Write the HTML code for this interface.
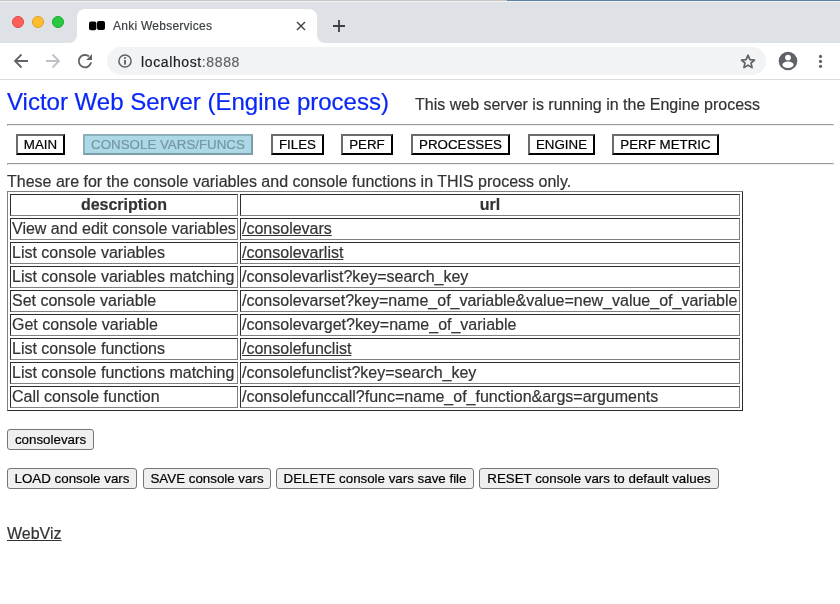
<!DOCTYPE html>
<html><head><meta charset="utf-8">
<style>
html,body{margin:0;padding:0;width:840px;height:604px;overflow:hidden;background:#fff;font-family:"Liberation Sans",sans-serif;}
.abs{position:absolute;}
#strip{position:absolute;left:0;top:0;width:840px;height:43px;background:#dee1e6;}
#topline{position:absolute;left:0;top:0;width:840px;height:1px;background:#c9cbcf;}
.light{position:absolute;top:16px;width:12px;height:12px;border-radius:50%;box-sizing:border-box;}
#tab{position:absolute;left:77px;top:9px;width:240px;height:34px;background:#fff;border-radius:8px 8px 0 0;}
.flare{position:absolute;top:35px;width:8px;height:8px;background:#fff;}
.flare i{position:absolute;left:0;top:0;width:8px;height:8px;background:#dee1e6;}
#toolbar{position:absolute;left:0;top:43px;width:840px;height:36px;background:#fff;}
#tbline{position:absolute;left:0;top:79px;width:840px;height:1px;background:#dadce0;}
#omni{position:absolute;left:107px;top:47px;width:659px;height:28px;border-radius:14px;background:#f1f3f4;}
#page{position:absolute;will-change:transform;-webkit-text-stroke:0.2px currentColor;left:0;top:80px;width:840px;height:524px;color:#333;font-size:16px;}
.hr{position:absolute;left:7px;width:827px;height:1px;background:#9a9a9a;}
.hr2{position:absolute;left:7px;width:827px;height:1px;background:#eeeeee;}
.nb{position:absolute;top:54px;height:21px;box-sizing:border-box;border:2px solid #000;border-top-color:#6b6b6b;border-left-color:#6b6b6b;background:#fff;color:#000;font-size:13.333px;line-height:15px;padding:1px 0;text-align:center;white-space:nowrap;}
.nb.act{background:#add8e6;color:#7497a1;border-color:#7b9ea8;border-top-color:#8cb0bb;border-left-color:#8cb0bb;}
table.t{position:absolute;left:7px;top:111px;border-collapse:separate;border-spacing:2px;font-size:16px;color:#333;}
table.t td,table.t th{padding:1px;line-height:18px;white-space:nowrap;}
table.t a{color:#333;text-decoration:underline;}
.btn{position:absolute;height:21px;box-sizing:border-box;border:1px solid #767676;border-radius:3px;background:#efefef;color:#000;font-size:13.333px;line-height:18px;padding-top:1px;text-align:center;white-space:nowrap;}
</style></head><body>
<div id="chrome" style="position:absolute;left:0;top:0;width:840px;height:80px;will-change:transform;-webkit-text-stroke:0.2px currentColor;">
<div id="strip"></div>
<div class="abs" style="left:0;top:0;width:507px;height:1px;background:#c4c4c4"></div><div class="abs" style="left:507px;top:0;width:333px;height:1px;background:#5f82a8"></div><div class="abs" style="left:0;top:1px;width:840px;height:1px;background:#f3f4f6"></div>
<div class="light" style="left:12px;background:#ff5f57;border:1px solid #e2463f;"></div>
<div class="light" style="left:32px;background:#febc2e;border:1px solid #e1a116;"></div>
<div class="light" style="left:52px;background:#28c840;border:1px solid #14ae2a;"></div>
<div class="flare" style="left:69px;"><i style="border-radius:0 0 8px 0;"></i></div>
<div class="flare" style="left:317px;"><i style="border-radius:0 0 0 8px;"></i></div>
<div id="tab"></div>
<svg class="abs" style="left:89px;top:21px" width="17" height="10" viewBox="0 0 17 10"><rect x="0" y="0.6" width="7.4" height="8.6" rx="2" fill="#000"/><rect x="8" y="0" width="8" height="9" rx="2" fill="#000"/></svg>
<div class="abs" style="left:113px;top:19px;font-size:12px;line-height:14px;color:#3c4043;letter-spacing:0.25px;white-space:nowrap;">Anki Webservices</div>
<svg class="abs" style="left:296px;top:21px" width="10" height="10" viewBox="0 0 10 10"><path d="M1 1L9 9M9 1L1 9" stroke="#3c4043" stroke-width="1.4"/></svg>
<svg class="abs" style="left:333px;top:20px" width="12" height="12" viewBox="0 0 12 12"><path d="M6 0V12M0 6H12" stroke="#3c4043" stroke-width="1.8"/></svg>
<div id="toolbar"></div>
<div id="tbline"></div>
<svg class="abs" style="left:13px;top:53px" width="16" height="16" viewBox="0 0 16 16"><path d="M15 8H2.5M8.5 1.5L2 8l6.5 6.5" fill="none" stroke="#5f6368" stroke-width="1.8"/></svg>
<svg class="abs" style="left:45px;top:53px" width="16" height="16" viewBox="0 0 16 16"><path d="M1 8H13.5M7.5 1.5L14 8l-6.5 6.5" fill="none" stroke="#bdc1c6" stroke-width="1.8"/></svg>
<svg class="abs" style="left:77px;top:53px" width="16" height="16" viewBox="0 0 16 16"><path d="M14.1 9.4A6.2 6.2 0 1 1 11.9 3.3" fill="none" stroke="#5f6368" stroke-width="1.9"/><path d="M15 1.1V6.9H9.2z" fill="#5f6368"/></svg>
<div id="omni"></div>
<svg class="abs" style="left:118px;top:54px" width="14" height="14" viewBox="0 0 14 14"><circle cx="7" cy="7" r="6.1" fill="none" stroke="#5f6368" stroke-width="1.5"/><rect x="6.2" y="6" width="1.6" height="4.6" fill="#45494e"/><rect x="6.2" y="3.1" width="1.6" height="1.7" fill="#45494e"/></svg>
<div class="abs" style="left:141px;top:54px;font-size:14px;line-height:16px;color:#202124;letter-spacing:0.62px;white-space:nowrap;">localhost<span style="color:#5f6368">:8888</span></div>
<svg class="abs" style="left:740px;top:53.5px" width="16" height="15" viewBox="0 0 16 15"><path d="M8 1.2l1.9 4.4 4.6.4-3.5 3 1.1 4.6L8 11.2l-4.1 2.4L5 9 1.5 6l4.6-.4z" fill="none" stroke="#5f6368" stroke-width="1.65" stroke-linejoin="round"/></svg>
<svg class="abs" style="left:778px;top:51px" width="20" height="20" viewBox="0 0 20 20"><circle cx="10" cy="10" r="9.3" fill="#5f6368"/><circle cx="10" cy="6.6" r="2.9" fill="#fff"/><ellipse cx="10" cy="13.7" rx="5.6" ry="3.2" fill="#fff"/></svg>
<svg class="abs" style="left:817px;top:53px" width="8" height="16" viewBox="0 0 8 16"><circle cx="3.5" cy="3.4" r="1.6" fill="#5f6368"/><circle cx="3.5" cy="8.4" r="1.6" fill="#5f6368"/><circle cx="3.5" cy="13.3" r="1.6" fill="#5f6368"/></svg>

</div>
<div id="page">
<div class="abs" style="left:7px;top:7.5px;font-size:24px;line-height:28px;color:#0a28f5;white-space:nowrap;">Victor Web Server (Engine process)</div>
<div class="abs" style="left:415px;top:16px;font-size:16px;line-height:18px;white-space:nowrap;">This web server is running in the Engine process</div>
<hr style="position:absolute;left:7px;top:44px;width:825px;margin:0;">
<div class="nb" style="left:16px;width:49px;">MAIN</div>
<div class="nb act" style="left:83px;width:170px;">CONSOLE VARS/FUNCS</div>
<div class="nb" style="left:271px;width:53px;">FILES</div>
<div class="nb" style="left:341px;width:52px;">PERF</div>
<div class="nb" style="left:411px;width:99px;">PROCESSES</div>
<div class="nb" style="left:528px;width:67px;">ENGINE</div>
<div class="nb" style="left:612px;width:107px;">PERF METRIC</div>
<hr style="position:absolute;left:7px;top:83px;width:825px;margin:0;">
<div class="abs" style="left:7px;top:93px;font-size:16px;line-height:18px;white-space:nowrap;">These are for the console variables and console functions in THIS process only.</div>
<table class="t" border="1">
<tr><th style="width:224px">description</th><th style="width:496px">url</th></tr>
<tr><td>View and edit console variables</td><td><a>/consolevars</a></td></tr>
<tr><td>List console variables</td><td><a>/consolevarlist</a></td></tr>
<tr><td>List console variables matching</td><td>/consolevarlist?key=search_key</td></tr>
<tr><td>Set console variable</td><td>/consolevarset?key=name_of_variable&amp;value=new_value_of_variable</td></tr>
<tr><td>Get console variable</td><td>/consolevarget?key=name_of_variable</td></tr>
<tr><td>List console functions</td><td><a>/consolefunclist</a></td></tr>
<tr><td>List console functions matching</td><td>/consolefunclist?key=search_key</td></tr>
<tr><td>Call console function</td><td>/consolefunccall?func=name_of_function&amp;args=arguments</td></tr>
</table>
<div class="btn" style="left:7px;top:349px;width:87px;">consolevars</div>
<div class="btn" style="left:7px;top:388px;width:130px;">LOAD console vars</div>
<div class="btn" style="left:143px;top:388px;width:128px;">SAVE console vars</div>
<div class="btn" style="left:276px;top:388px;width:198px;">DELETE console vars save file</div>
<div class="btn" style="left:479px;top:388px;width:240px;">RESET console vars to default values</div>
<div class="abs" style="left:7px;top:445px;font-size:16px;line-height:18px;white-space:nowrap;text-decoration:underline;">WebViz</div>
</div>
</body></html>
